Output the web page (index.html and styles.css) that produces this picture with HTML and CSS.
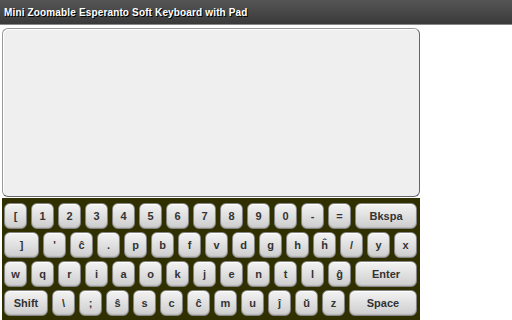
FILE: index.html
```html
<!DOCTYPE html>
<html lang="eo">
<head>
  <meta charset="UTF-8" />
  <title>Mini Zoomable Esperanto Soft Keyboard with Pad</title>
  <link rel="stylesheet" href="styles.css">
</head>
<body>
  <div class="titlebar">Mini Zoomable Esperanto Soft Keyboard with Pad</div>

  <div class="pad">
    <textarea class="pad-text"></textarea>
  </div>

  <div class="keyboard">
    <div class="row">
      <button class="key">[</button>
      <button class="key">1</button>
      <button class="key">2</button>
      <button class="key">3</button>
      <button class="key">4</button>
      <button class="key">5</button>
      <button class="key">6</button>
      <button class="key">7</button>
      <button class="key">8</button>
      <button class="key">9</button>
      <button class="key">0</button>
      <button class="key">-</button>
      <button class="key">=</button>
      <button class="key key-wide">Bkspa</button>
    </div>
    <div class="row">
      <button class="key key-bracket">]</button>
      <button class="key">'</button>
      <button class="key">ĉ</button>
      <button class="key">.</button>
      <button class="key">p</button>
      <button class="key">b</button>
      <button class="key">f</button>
      <button class="key">v</button>
      <button class="key">d</button>
      <button class="key">g</button>
      <button class="key">h</button>
      <button class="key">ĥ</button>
      <button class="key">/</button>
      <button class="key">y</button>
      <button class="key">x</button>
    </div>
    <div class="row">
      <button class="key">w</button>
      <button class="key">q</button>
      <button class="key">r</button>
      <button class="key">i</button>
      <button class="key">a</button>
      <button class="key">o</button>
      <button class="key">k</button>
      <button class="key">j</button>
      <button class="key">e</button>
      <button class="key">n</button>
      <button class="key">t</button>
      <button class="key">l</button>
      <button class="key">ĝ</button>
      <button class="key key-wide">Enter</button>
    </div>
    <div class="row">
      <button class="key key-shift">Shift</button>
      <button class="key">\</button>
      <button class="key">;</button>
      <button class="key">ŝ</button>
      <button class="key">s</button>
      <button class="key">c</button>
      <button class="key">ĉ</button>
      <button class="key">m</button>
      <button class="key">u</button>
      <button class="key">ĵ</button>
      <button class="key">ŭ</button>
      <button class="key">z</button>
      <button class="key key-space">Space</button>
    </div>
  </div>
</body>
</html>
```

FILE: styles.css
```css
body {
  margin: 0;
  background: #fff;
  font-family: "Liberation Sans", Arial, sans-serif;
  overflow: hidden;
}
.titlebar {
  height: 24px;
  line-height: 25px;
  padding-left: 4px;
  background: linear-gradient(#555, #3a3a3a);
  border-bottom: 1px solid #888;
  color: #fff;
  font-size: 10px;
  font-weight: bold;
  letter-spacing: 0.15px;
  text-shadow: 1px 1px 0 #000;
  white-space: nowrap;
}
.pad {
  margin: 3px 0 0 2px;
  width: 418px;
}
.pad-text {
  display: block;
  box-sizing: border-box;
  width: 418px;
  height: 169px;
  margin: 0;
  padding: 4px;
  background: #efefef;
  border: 1px solid #999;
  border-right-color: #666;
  border-bottom-color: #666;
  border-radius: 6px;
  box-shadow: inset 1px 1px 0 #fff;
  resize: none;
  outline: none;
}
.keyboard {
  width: 414px;
  margin: 1px 0 0 2px;
  padding: 5px 2px 4px 2px;
  background: #2f2f00;
  display: flex;
  flex-direction: column;
  gap: 3px;
}
.row {
  display: flex;
  gap: 4px;
}
.key {
  box-sizing: border-box;
  width: 23px;
  height: 26px;
  padding: 0;
  background: linear-gradient(#f3f3f3, #cdcdcd);
  border: 1px solid #858585;
  border-radius: 6px;
  box-shadow: inset 0 1px 0 #fff, inset 0 -1px 1px #b5b5b5;
  color: #333;
  font-family: "Liberation Sans", Arial, sans-serif;
  font-size: 11px;
  font-weight: bold;
  text-align: center;
}
.key-wide {
  width: 62px;
}
.key-bracket {
  width: 35px;
}
.key-shift {
  width: 44px;
}
.key-space {
  width: 68px;
}
```
